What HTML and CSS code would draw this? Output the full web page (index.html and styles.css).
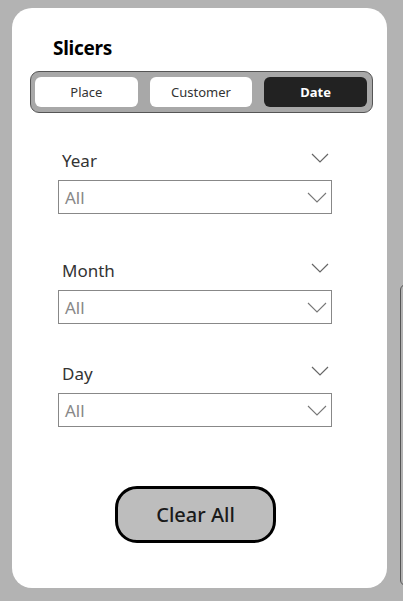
FILE: index.html
```html
<!DOCTYPE html>
<html>
<head>
<meta charset="utf-8">
<link rel="stylesheet" href="styles.css">
</head>
<body>
<div class="page">
  <div class="card">
    <h1 class="title">Slicers</h1>
    <div class="tabs">
      <div class="tab">Place</div>
      <div class="tab">Customer</div>
      <div class="tab active">Date</div>
    </div>
    <div class="slicers">
      <div class="slicer slicer-first">
        <div class="slicer-head">
          <span class="label">Year</span>
          <svg class="chev" width="18" height="10" viewBox="0 0 18 10"><path d="M1 1 L9 9 L17 1" fill="none" stroke="#666" stroke-width="1.2"/></svg>
        </div>
        <div class="select">
          <span class="value">All</span>
          <svg class="chev" width="20" height="11" viewBox="0 0 20 11"><path d="M1 1 L10 10 L19 1" fill="none" stroke="#777" stroke-width="1.1"/></svg>
        </div>
      </div>
      <div class="slicer">
        <div class="slicer-head">
          <span class="label">Month</span>
          <svg class="chev" width="18" height="10" viewBox="0 0 18 10"><path d="M1 1 L9 9 L17 1" fill="none" stroke="#666" stroke-width="1.2"/></svg>
        </div>
        <div class="select">
          <span class="value">All</span>
          <svg class="chev" width="20" height="11" viewBox="0 0 20 11"><path d="M1 1 L10 10 L19 1" fill="none" stroke="#777" stroke-width="1.1"/></svg>
        </div>
      </div>
      <div class="slicer">
        <div class="slicer-head">
          <span class="label">Day</span>
          <svg class="chev" width="18" height="10" viewBox="0 0 18 10"><path d="M1 1 L9 9 L17 1" fill="none" stroke="#666" stroke-width="1.2"/></svg>
        </div>
        <div class="select">
          <span class="value">All</span>
          <svg class="chev" width="20" height="11" viewBox="0 0 20 11"><path d="M1 1 L10 10 L19 1" fill="none" stroke="#777" stroke-width="1.1"/></svg>
        </div>
      </div>
    </div>
    <div class="actions">
      <button class="clear">Clear All</button>
    </div>
  </div>
  <div class="side-panel"></div>
</div>
</body>
</html>
```
FILE: styles.css
```css
html, body {
  margin: 0;
  padding: 0;
  background: #b3b3b3;
  font-family: "Noto Sans", "Open Sans", sans-serif;
}
.page {
  display: flex;
  align-items: flex-start;
  width: 403px;
  height: 601px;
  overflow: hidden;
}
.card {
  flex-shrink: 0;
  margin: 8px 0 0 12px;
  width: 375px;
  height: 580px;
  background: #fff;
  border-radius: 20px;
  box-sizing: border-box;
  padding: 27px 0 0 18px;
  display: flex;
  flex-direction: column;
}
.title {
  margin: 0 0 10px 23px;
  font-size: 19px;
  font-weight: 700;
  color: #000;
  line-height: 26px;
  letter-spacing: -0.3px;
}
.tabs {
  width: 343px;
  height: 42px;
  box-sizing: border-box;
  background: #a8a8a8;
  border: 1px solid #555;
  border-radius: 9px;
  padding: 5px 5px 5px 4px;
  display: flex;
  gap: 12px;
}
.tab {
  flex: 1;
  background: #fff;
  border-radius: 6px;
  display: flex;
  align-items: center;
  justify-content: center;
  font-size: 13px;
  color: #333;
}
.tab.active {
  background: #222;
  color: #fff;
  font-weight: 700;
}
.slicers {
  margin: 35px 0 0 28px;
  width: 274px;
  display: flex;
  flex-direction: column;
  gap: 37px;
}
.slicer {
  display: flex;
  flex-direction: column;
}
.slicer-first {
  margin-bottom: 7px;
}
.slicer-head {
  display: flex;
  justify-content: space-between;
  align-items: center;
  height: 24px;
  padding: 0 3px 0 4px;
  margin-bottom: 8px;
}
.slicer-head .chev {
  margin-top: -4px;
}
.label {
  font-size: 17px;
  color: #333;
}
.select {
  height: 34px;
  box-sizing: border-box;
  border: 1px solid #888;
  display: flex;
  align-items: center;
  justify-content: space-between;
  padding: 0 4px 0 6px;
}
.value {
  font-size: 17px;
  color: #888;
}
.actions {
  margin-top: 59px;
  padding-left: 85px;
}
.clear {
  width: 161px;
  height: 57px;
  border: 3px solid #000;
  border-radius: 22px;
  background: #bdbdbd;
  font-family: "Noto Sans", "Open Sans", sans-serif;
  font-size: 20px;
  font-weight: 500;
  color: #1a1a1a;
  padding: 0;
}
.side-panel {
  flex-shrink: 0;
  margin: 284px 0 0 13px;
  width: 20px;
  height: 300px;
  border: 1px solid #555;
  border-radius: 6px;
}
```
